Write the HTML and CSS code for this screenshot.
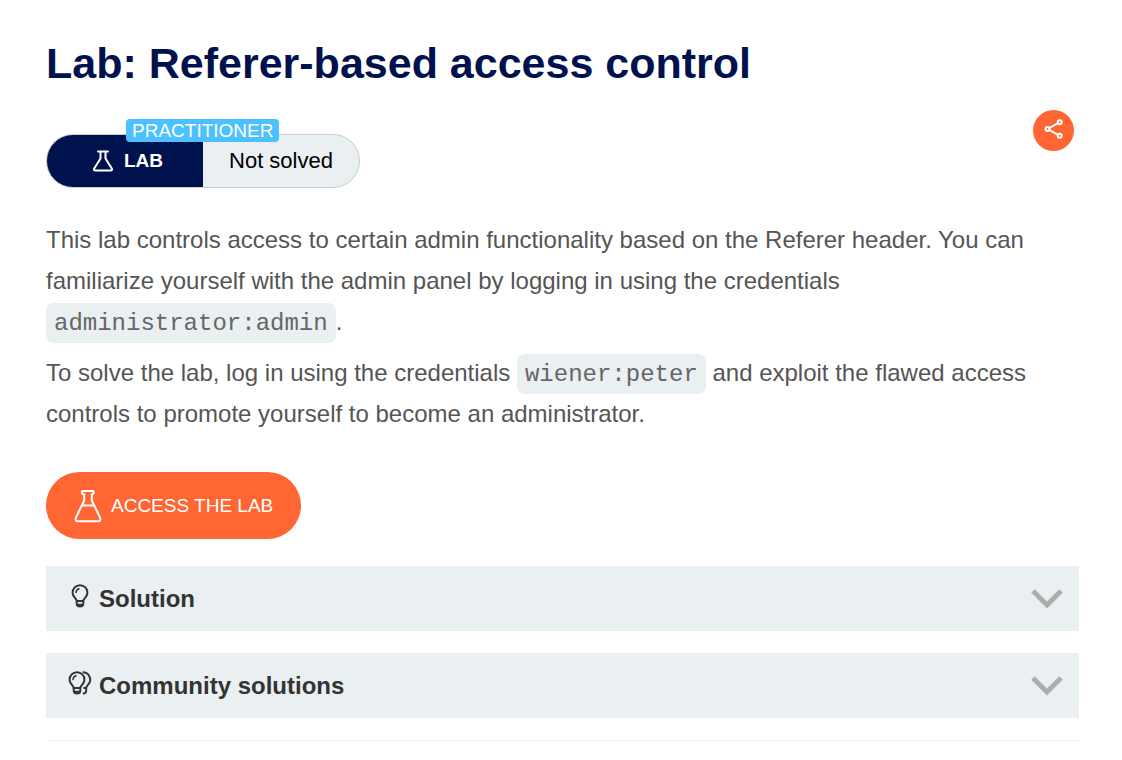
FILE: index.html
```html
<!DOCTYPE html>
<html lang="en">
<head>
<meta charset="utf-8">
<meta name="viewport" content="width=device-width, initial-scale=1">
<title>Lab: Referer-based access control</title>
<link rel="stylesheet" href="styles.css">
</head>
<body>
<main class="page">
  <h1 class="title">Lab: Referer-based access control</h1>
  <div class="meta">
    <div class="status">
      <span class="status-level">PRACTITIONER</span>
      <span class="status-lab">
        <svg class="flask-small" viewBox="0 0 20 22" aria-hidden="true"><path d="M5 1.500h10M7.500 2v6.500L1.200 18.500q-.8 2 1.200 2h15.200q2 0 1.200-2L12.500 8.500V2"/></svg>
        LAB
      </span>
      <span class="status-state">Not solved</span>
    </div>
    <button class="share" type="button" aria-label="Share">
      <svg viewBox="0 0 20 20" aria-hidden="true"><path d="M5.500 8.900l8.200-4.500M5.500 11.100l8.200 4.500"/><circle cx="3.500" cy="10" r="2"/><circle cx="15.700" cy="3.300" r="2"/><circle cx="15.700" cy="16.700" r="2"/></svg>
    </button>
  </div>
  <div class="description">
    <p>This lab controls access to certain admin functionality based on the Referer header. You can familiarize yourself with the admin panel by logging in using the credentials <code>administrator:admin</code>.</p>
    <p>To solve the lab, log in using the credentials <code>wiener:peter</code> and exploit the flawed access controls to promote yourself to become an administrator.</p>
  </div>
  <a class="access" href="#">
    <svg viewBox="0 0 28 34" aria-hidden="true"><path d="M8.500 2h10.500q1.500 1.500 0 3h-1.200v6.500L26 28.500q1.200 3.700-1.700 3.700H3.700Q.8 32.200 2 28.500l8.200-17V5H8.500Q7 3.500 8.500 2zM7.500 16.500h13"/></svg>
    ACCESS THE LAB
  </a>
  <button class="accordion" type="button" aria-expanded="false">
    <svg class="bulb" viewBox="0 0 24 24" aria-hidden="true"><path d="M8.700 17c0-1.300-.5-1.800-1.600-2.900a7.400 7.400 0 1 1 9.800 0c-1.100 1.100-1.600 1.600-1.600 2.900z"/><path d="M8.700 17v2.500q0 3 3.300 3t3.300-3V17"/><path class="fine" d="M8 8.500q.3-3 3-3.700"/><path class="base" d="M9.500 20.700h5"/></svg>
    <span>Solution</span>
    <svg class="chevron" viewBox="0 0 32 20" aria-hidden="true"><path d="M2 2l14 14L30 2"/></svg>
  </button>
  <button class="accordion" type="button" aria-expanded="false">
    <svg class="bulb" viewBox="0 0 24 24" aria-hidden="true"><path d="M5.700 17c0-1.300-.5-1.800-1.600-2.900a7.400 7.400 0 1 1 9.800 0c-1.100 1.100-1.600 1.600-1.600 2.900z"/><path d="M5.700 17v2.500q0 3 3.300 3t3.300-3V17"/><path class="fine" d="M5 8.500q.3-3 3-3.700"/><path class="base" d="M6.500 20.700h5"/><path d="M15.500 1.300a7.400 7.400 0 0 1 4.300 12.800c-1.100 1.100-1.600 1.600-1.600 2.900h-2M18.200 17v2.500q0 2.600-2.500 3"/></svg>
    <span>Community solutions</span>
    <svg class="chevron" viewBox="0 0 32 20" aria-hidden="true"><path d="M2 2l14 14L30 2"/></svg>
  </button>
  <hr class="rule">
</main>
</body>
</html>
```
FILE: styles.css
```css
* { box-sizing: border-box; }
body {
  margin: 0;
  background: #fff;
  color: #555;
  font-family: "Liberation Sans", Arial, sans-serif;
}
.page { padding: 37px 43px 18px 46px; }
.title {
  margin: 0;
  color: #00124d;
  font-size: 43px;
  line-height: 52px;
}
.meta {
  display: flex;
  justify-content: space-between;
  align-items: flex-start;
  margin: 21px 5px 31px 0;
}
.status {
  position: relative;
  display: flex;
  height: 54px;
  margin-top: 24px;
  border: 1px solid #c8cdcf;
  border-radius: 27px;
  background: linear-gradient(90deg, #00124d 50%, #eaeff2 50%);
  font-size: 22px;
}
.status-level {
  position: absolute;
  top: -16px;
  left: 79px;
  padding: 0 6px;
  border-radius: 4px;
  background: #4cc1ff;
  color: #fff;
  font-size: 19px;
  line-height: 23px;
}
.status-lab,
.status-state {
  display: flex;
  align-items: center;
  justify-content: center;
  width: 156px;
  padding-bottom: 1px;
}
.status-lab {
  gap: 11px;
  padding-left: 6px;
  color: #fff;
  font-size: 19px;
  font-weight: bold;
}
.status-state { color: #000; }
svg {
  flex: none;
  fill: none;
  stroke: currentColor;
  stroke-linecap: round;
  stroke-linejoin: round;
}
.flask-small { width: 20px; height: 22px; stroke-width: 2; }
.share {
  display: flex;
  align-items: center;
  justify-content: center;
  width: 41px;
  height: 41px;
  padding: 0 0 3px;
  border: 0;
  border-radius: 50%;
  background: #f63;
  color: #fff;
}
.share svg { width: 20px; height: 20px; stroke-width: 2; }
.description { font-size: 24px; line-height: 41px; }
.description p { margin: 0 0 10px; }
.description code {
  padding: 7px 8px 6px;
  border-radius: 8px;
  background: #eaeff2;
  color: #666;
  font-family: "Liberation Mono", "Courier New", monospace;
  font-size: 24px;
  line-height: 24px;
}
.access {
  display: inline-flex;
  align-items: center;
  gap: 9px;
  height: 67px;
  margin: 28px 0 27px;
  padding: 0 28px;
  border-radius: 34px;
  background: #f63;
  color: #fff;
  font-size: 19px;
  text-decoration: none;
}
.access svg { width: 28px; height: 34px; stroke-width: 2; }
.accordion {
  display: flex;
  align-items: center;
  gap: 7px;
  width: 100%;
  height: 65px;
  margin-bottom: 22px;
  padding: 0 16px 0 22px;
  border: 0;
  background: #eaeff2;
  color: #333332;
  font: bold 24px/30px "Liberation Sans", Arial, sans-serif;
  text-align: left;
}
.accordion span { flex: 1; }
.bulb { width: 24px; height: 24px; margin-bottom: 6px; stroke-width: 2; }
.bulb .fine { stroke-width: 1.5; }
.chevron { width: 32px; height: 20px; color: #adadad; stroke-width: 5; stroke-linecap: butt; stroke-linejoin: miter; }
.rule { margin: 0; border: 0; border-top: 1px solid #f0f2f4; }
```
